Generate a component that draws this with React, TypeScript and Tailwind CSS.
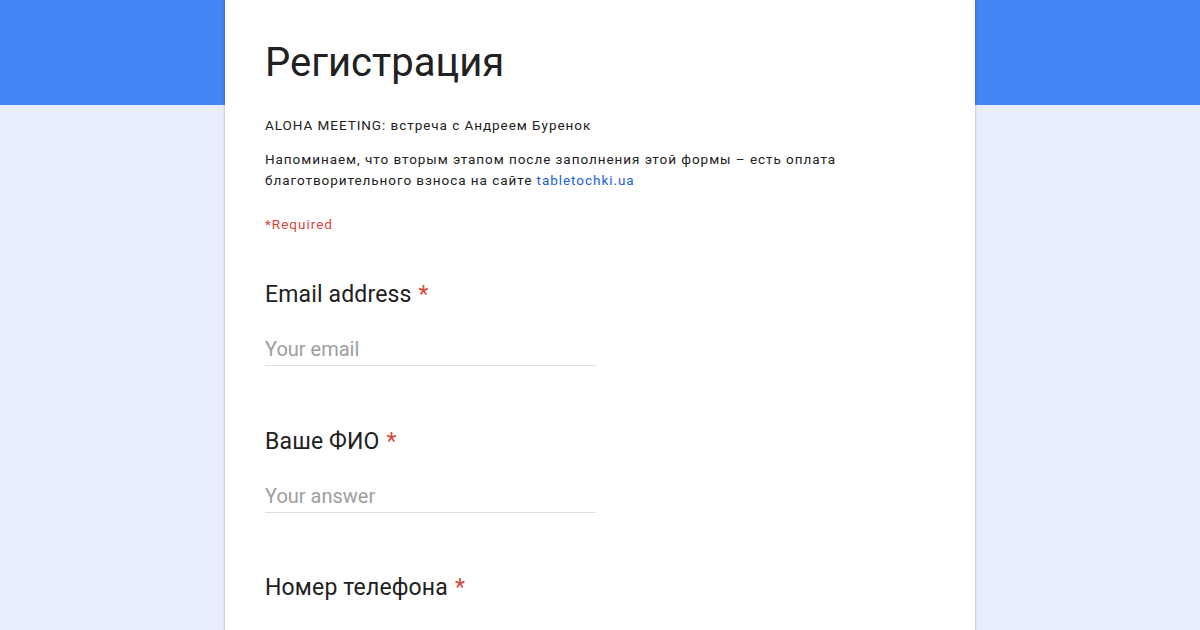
const questions = [
  { title: "Email address", placeholder: "Your email" },
  { title: "Ваше ФИО", placeholder: "Your answer" },
  { title: "Номер телефона", placeholder: "" },
];

export default function App() {
  return (
    <div
      className="relative h-[630px] w-[1200px] overflow-hidden bg-[#e8eefb]"
      style={{ fontFamily: "Roboto, 'Liberation Sans', sans-serif" }}
    >
      <div className="absolute inset-x-0 top-0 h-[105px] bg-[#4285f4]" />
      <div className="relative mx-auto h-[700px] w-[750px] bg-white px-10 shadow-[0_0_2px_rgba(0,0,0,0.25),0_2px_3px_rgba(0,0,0,0.1)]">
        <h1 className="pt-[39px] text-[40px] leading-[48px] text-[#212121]">
          Регистрация
        </h1>
        <p className="mt-[28px] text-[13.5px] leading-[20px] tracking-[0.95px] text-[#212121]">
          ALOHA MEETING: встреча с Андреем Буренок
        </p>
        <p className="mt-[14px] text-[13.5px] leading-[21px] tracking-[0.95px] text-[#212121]">
          Напоминаем, что вторым этапом после заполнения этой формы – есть оплата
          <br />
          благотворительного взноса на сайте{" "}
          <span className="text-[#1a62d4]">tabletochki.ua</span>
        </p>
        <p className="mt-[23px] text-[13.5px] leading-[20px] tracking-[1px] text-[#db4437]">
          *Required
        </p>
        <div className="mt-[47px] flex flex-col">
          {questions.map((q) => (
            <div key={q.title} className="h-[146.5px]">
              <div className="text-[23px] leading-[28px] tracking-[0.15px] text-[#212121]">
                {q.title}
                <span className="ml-[7px] text-[#db4437]">*</span>
              </div>
              {q.placeholder && (
                <div className="mt-[29px] w-[331px] border-b border-[#e0e0e0] pb-[5px] text-[20px] leading-[22px] text-[#9e9e9e]">
                  {q.placeholder}
                </div>
              )}
            </div>
          ))}
        </div>
      </div>
    </div>
  );
}
